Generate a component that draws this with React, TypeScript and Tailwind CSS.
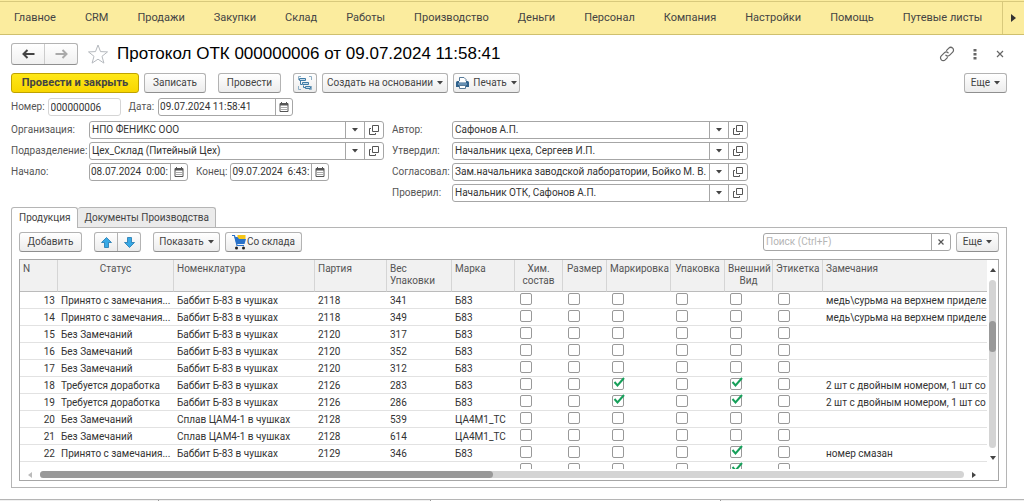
import { useState } from 'react';
import type { ReactNode } from 'react';

type CheckKey = 'chem' | 'size' | 'marking' | 'packing' | 'look' | 'label';

interface Row {
  n: number;
  status: string;
  item: string;
  batch: string;
  weight: string;
  grade: string;
  checks: CheckKey[];
  note: string;
}

const MENU = [
  'Главное',
  'CRM',
  'Продажи',
  'Закупки',
  'Склад',
  'Работы',
  'Производство',
  'Деньги',
  'Персонал',
  'Компания',
  'Настройки',
  'Помощь',
  'Путевые листы',
];

const CHECK_COLUMNS: { key: CheckKey; title: string }[] = [
  { key: 'chem', title: 'Хим. состав' },
  { key: 'size', title: 'Размер' },
  { key: 'marking', title: 'Маркировка' },
  { key: 'packing', title: 'Упаковка' },
  { key: 'look', title: 'Внешний Вид' },
  { key: 'label', title: 'Этикетка' },
];

const B83 = 'Баббит Б-83 в чушках';
const CAM = 'Сплав ЦАМ4-1 в чушках';

const ROWS: Row[] = [
  { n: 13, status: 'Принято с замечания...', item: B83, batch: '2118', weight: '341', grade: 'Б83', checks: [], note: 'медь\\сурьма на верхнем приделе' },
  { n: 14, status: 'Принято с замечания...', item: B83, batch: '2118', weight: '349', grade: 'Б83', checks: [], note: 'медь\\сурьма на верхнем приделе' },
  { n: 15, status: 'Без Замечаний', item: B83, batch: '2120', weight: '317', grade: 'Б83', checks: [], note: '' },
  { n: 16, status: 'Без Замечаний', item: B83, batch: '2120', weight: '352', grade: 'Б83', checks: [], note: '' },
  { n: 17, status: 'Без Замечаний', item: B83, batch: '2120', weight: '312', grade: 'Б83', checks: [], note: '' },
  { n: 18, status: 'Требуется доработка', item: B83, batch: '2126', weight: '283', grade: 'Б83', checks: ['marking', 'look'], note: '2 шт с двойным номером, 1 шт со' },
  { n: 19, status: 'Требуется доработка', item: B83, batch: '2126', weight: '286', grade: 'Б83', checks: ['marking', 'look'], note: '2 шт с двойным номером, 1 шт со' },
  { n: 20, status: 'Без Замечаний', item: CAM, batch: '2128', weight: '539', grade: 'ЦА4М1_ТС', checks: [], note: '' },
  { n: 21, status: 'Без Замечаний', item: CAM, batch: '2128', weight: '614', grade: 'ЦА4М1_ТС', checks: [], note: '' },
  { n: 22, status: 'Принято с замечания...', item: B83, batch: '2129', weight: '346', grade: 'Б83', checks: ['look'], note: 'номер смазан' },
];

const buttonClass =
  'flex h-5 items-center justify-center rounded-[3px] border border-[#b3b3b3] border-b-[#8f8f8f] bg-linear-to-b from-white to-[#ececec] whitespace-nowrap text-[#444]';

function Caret() {
  return (
    <svg width="6" height="4" viewBox="0 0 6 4" className="shrink-0" aria-hidden="true">
      <path d="M0 0h6L3 3.5z" fill="#444" />
    </svg>
  );
}

function CalendarIcon() {
  return (
    <svg width="10" height="10" viewBox="0 0 10 10" aria-hidden="true">
      <path d="M1 1.5h8v8H1z" fill="#fff" stroke="#555" />
      <path d="M1 1h8v2.5H1z" fill="#555" />
      <path d="M2.5 0v2M7.5 0v2" stroke="#555" />
      <path d="M2.5 5.5h5.5M2.5 7.5h5.5" stroke="#555" strokeDasharray="1 1" />
    </svg>
  );
}

function OpenIcon() {
  return (
    <svg width="10" height="10" viewBox="0 0 10 10" fill="none" stroke="#555" aria-hidden="true">
      <path d="M3.5 0.5h6v6h-6z" />
      <path d="M2 3.5H0.5v6h6V8" />
    </svg>
  );
}

function StarIcon() {
  return (
    <svg width="22" height="20" viewBox="0 0 22 20" fill="none" stroke="#b5b9be" aria-hidden="true">
      <path d="M11 1l2.5 6.6 7 .3-5.5 4.4 1.9 6.8L11 15.2l-5.9 3.9L7 12.3 1.5 7.9l7-.3z" />
    </svg>
  );
}

function LinkIcon() {
  return (
    <svg width="16" height="16" viewBox="0 0 16 16" fill="none" stroke="#666" strokeWidth="1.2" strokeLinecap="round" aria-hidden="true">
      <path d="M7.6 4.4L9.8 2.2a2.7 2.7 0 0 1 3.9 3.9L10.7 9.2a2.7 2.7 0 0 1-3.8 0" />
      <path d="M8.4 11.6L6.2 13.8a2.7 2.7 0 0 1-3.9-3.9L5.3 6.8a2.7 2.7 0 0 1 3.8 0" />
    </svg>
  );
}

function StructureIcon() {
  return (
    <svg width="14" height="14" viewBox="0 0 14 14" fill="none" stroke="#3f7ba6" className="shrink-0" aria-hidden="true">
      <path d="M0.5 4V0.5H3M11 0.5h2.5V4M0.5 10v3.5H3M11 13.5h2.5V10" stroke="#8fb0c6" />
      <path d="M2.5 5v3.5H4M5.5 9.5v2H7" />
      <path d="M1.5 2.5h6v2h-6zM4.5 6.5h6v2h-6zM7.5 10.5h5v2h-5z" fill="#c4dcec" />
    </svg>
  );
}

function PrinterIcon() {
  return (
    <svg width="13" height="12" viewBox="0 0 13 12" className="shrink-0" aria-hidden="true">
      <path d="M3.5 0.5h4.5l2 2v3H3.5z" fill="#fff" stroke="#587b99" />
      <path d="M1.5 4h10a1.5 1.5 0 0 1 1.5 1.5V10H0V5.5A1.5 1.5 0 0 1 1.5 4z" fill="#2f618c" />
      <path d="M3 4h7v1.5H3z" fill="#fff" />
      <path d="M2 7h9" stroke="#9dbfda" />
      <path d="M3.5 8.5h6v3h-6z" fill="#fff" stroke="#587b99" />
    </svg>
  );
}

function BlueArrow({ down = false }: { down?: boolean }) {
  return (
    <svg width="11" height="11" viewBox="0 0 11 11" className={down ? 'rotate-180' : ''} aria-hidden="true">
      <path d="M5.5 0.5L10.5 5.5H7.5V10.5h-4V5.5H0.5z" fill="#37a9e6" stroke="#2077ae" strokeWidth=".8" />
    </svg>
  );
}

function CartIcon() {
  return (
    <svg width="15" height="16" viewBox="0 0 15 16" className="shrink-0" aria-hidden="true">
      <path d="M5.5 1h8v4h-8z" fill="#f5c518" />
      <path d="M0 1.5h2.5L5 11.5h7" fill="none" stroke="#2871c9" strokeWidth="1.2" />
      <path d="M2.5 3h3l1.5 2h7L12.5 10H4.5z" fill="#2871c9" />
      <circle cx="4.5" cy="14" r="1.5" fill="#222" />
      <circle cx="11.5" cy="14" r="1.5" fill="#222" />
    </svg>
  );
}

function NavArrow({ color, flip = false }: { color: string; flip?: boolean }) {
  return (
    <svg width="13" height="10" viewBox="0 0 13 10" className={flip ? 'rotate-180' : ''} fill="none" stroke={color} aria-hidden="true">
      <path d="M12.5 5H2" strokeWidth="2" />
      <path d="M5.5 1L1.5 5l4 4" strokeWidth="2" />
    </svg>
  );
}

function ScrollArrow({ className = '', color = '#444' }: { className?: string; color?: string }) {
  return (
    <svg width="4" height="6" viewBox="0 0 4 6" className={className} aria-hidden="true">
      <path d="M0 0l4 3-4 3z" fill={color} />
    </svg>
  );
}

const boxClass = 'flex h-[18px] min-w-0 overflow-hidden rounded-[3px] border border-[#a6a6a6] bg-white';
const inputClass = 'min-w-0 flex-1 pl-[2px] text-[#333] outline-none';
const innerButtonClass = 'flex w-[19px] shrink-0 items-center justify-center border-l border-[#a6a6a6]';

function RefField({ id, label, value }: { id: string; label: string; value: string }) {
  return (
    <>
      <label htmlFor={id}>{label}</label>
      <div className={boxClass}>
        <input id={id} defaultValue={value} className={inputClass} />
        <button aria-label="Выбрать" className={innerButtonClass}>
          <Caret />
        </button>
        <button aria-label="Открыть" className={innerButtonClass}>
          <OpenIcon />
        </button>
      </div>
    </>
  );
}

function DateField({ id, value, width }: { id: string; value: string; width: string }) {
  return (
    <div className={`${boxClass} ${width}`}>
      <input id={id} defaultValue={value} className="min-w-0 flex-1 pl-px text-[#333] outline-none" />
      <button aria-label="Календарь" className="flex w-[17px] shrink-0 items-center justify-center border-l border-[#a6a6a6]">
        <CalendarIcon />
      </button>
    </div>
  );
}

function CheckBox({ name, checked }: { name: string; checked: boolean }) {
  return (
    <span className="relative block h-3 w-3">
      <input
        type="checkbox"
        aria-label={name}
        defaultChecked={checked}
        className="peer block h-3 w-3 appearance-none rounded-[2px] border border-[#999] bg-white"
      />
      <svg
        width="12"
        height="12"
        viewBox="0 0 12 12"
        className="pointer-events-none absolute top-[-1px] left-px hidden peer-checked:block"
        fill="none"
        stroke="#16a05a"
        strokeWidth="2"
        aria-hidden="true"
      >
        <path d="M1.5 5l3 3.5L11 1" />
      </svg>
    </span>
  );
}

function Th({ children, center = false }: { children: ReactNode; center?: boolean }) {
  return (
    <th
      className={`h-8 border-r border-b border-r-[#d5d5d5] border-b-[#bbb] px-[3px] pt-[3px] align-top leading-3 font-normal last:border-r-0 ${center ? 'text-center' : 'text-left'}`}
    >
      {children}
    </th>
  );
}

export default function App() {
  const [tab, setTab] = useState('products');

  const tabClass = (name: string) =>
    tab === name
      ? '-mb-px h-[21px] rounded-t-[3px] border border-b-0 border-[#b5b5b5] bg-white px-[7px]'
      : 'h-5 rounded-t-[3px] border border-b-0 border-l-0 border-[#b5b5b5] bg-[#ebebeb] px-[6px]';

  return (
    <div className="bg-white font-[Roboto,'Noto_Sans',sans-serif] text-[10px] leading-[14px] text-[#555]">
      <nav className="flex h-[35px] border-b border-[#cfc06e] bg-[#fbec9e] pt-px text-[11px] text-[#444]">
        <div className="flex min-w-0 flex-1 items-center gap-[29px] overflow-hidden border-t border-[#d8c97c] pl-[14px]">
          {MENU.map(item => (
            <a key={item} href="#" className="whitespace-nowrap">
              {item}
            </a>
          ))}
        </div>
        <button aria-label="Дальше" className="flex w-[22px] items-center justify-center border-t border-l border-[#d8c97c]">
          <svg width="5" height="8" viewBox="0 0 5 8" aria-hidden="true">
            <path d="M0 0l5 4-5 4z" fill="#333" />
          </svg>
        </button>
      </nav>

      <header className="flex h-[38px] items-center pr-[19px] pl-[11px]">
        <div className="flex h-[22px] w-[67px] shrink-0 rounded-[3px] border border-[#b3b3b3] border-b-[#8f8f8f] bg-linear-to-b from-white to-[#f0f0f0]">
          <button aria-label="Назад" className="flex flex-1 items-center justify-center">
            <NavArrow color="#444" />
          </button>
          <button aria-label="Вперед" className="flex flex-1 items-center justify-center border-l border-[#ccc]">
            <NavArrow color="#aaa" flip />
          </button>
        </div>
        <button aria-label="В избранное" className="ml-[9px]">
          <StarIcon />
        </button>
        <h1 className="ml-2 flex-1 truncate font-['Liberation_Sans',Arial,sans-serif] text-[17px] leading-6 text-black">
          Протокол ОТК 000000006 от 09.07.2024 11:58:41
        </h1>
        <div className="flex items-center gap-[18px]">
          <button aria-label="Ссылка">
            <LinkIcon />
          </button>
          <button aria-label="Меню">
            <svg width="4" height="12" viewBox="0 0 4 12" fill="#666" aria-hidden="true">
              <path d="M.5 1h3v2.5h-3zM.5 5h3v2.5h-3zM.5 9h3v2.5h-3z" />
            </svg>
          </button>
          <button aria-label="Закрыть">
            <svg width="10" height="8" viewBox="0 0 10 8" stroke="#666" strokeWidth="1.2" aria-hidden="true">
              <path d="M2 1l6 6M8 1L2 7" />
            </svg>
          </button>
        </div>
      </header>

      <main className="px-[11px]">
        <div className="flex">
          <button className="h-5 w-32 rounded-[3px] border border-[#bfa200] bg-linear-to-b from-[#ffe817] to-[#f8d600] text-[11px] font-bold text-[#444]">
            Провести и закрыть
          </button>
          <button className={`${buttonClass} ml-[5px] w-[62px]`}>Записать</button>
          <button className={`${buttonClass} ml-3 w-[63px]`}>Провести</button>
          <button aria-label="Структура подчиненности" className={`${buttonClass} ml-3 w-6`}>
            <StructureIcon />
          </button>
          <button className={`${buttonClass} ml-[5px] w-[126px] gap-1`}>
            Создать на основании
            <Caret />
          </button>
          <button className={`${buttonClass} ml-[5px] w-[67px] gap-1`}>
            <PrinterIcon />
            Печать
            <Caret />
          </button>
          <button className={`${buttonClass} mr-[6px] ml-auto w-[43px] gap-1`}>
            Еще
            <Caret />
          </button>
        </div>

        <div className="mt-[5px] flex items-center">
          <label htmlFor="number">Номер:</label>
          <input
            id="number"
            defaultValue="000000006"
            className="ml-[3px] h-[18px] w-[73px] rounded-[3px] border border-[#d5d5d5] pl-[2px] text-[#333] outline-none"
          />
          <label htmlFor="date" className="mr-1 ml-2">
            Дата:
          </label>
          <DateField id="date" value="09.07.2024 11:58:41" width="w-[135px]" />
        </div>

        <div className="mt-[5px] flex items-start gap-2">
          <div className="grid grid-cols-[74px_295px] items-center gap-x-1 gap-y-[3px]">
            <RefField id="org" label="Организация:" value="НПО ФЕНИКС ООО" />
            <RefField id="dept" label="Подразделение:" value="Цех_Склад (Питейный Цех)" />
            <label htmlFor="start">Начало:</label>
            <div className="flex items-center">
              <DateField id="start" value="08.07.2024  0:00:" width="w-[99px]" />
              <label htmlFor="end" className="mr-[3px] ml-2">
                Конец:
              </label>
              <DateField id="end" value="09.07.2024  6:43:" width="w-[99px]" />
            </div>
          </div>
          <div className="grid grid-cols-[56px_296px] items-center gap-x-1 gap-y-[3px]">
            <RefField id="author" label="Автор:" value="Сафонов А.П." />
            <RefField id="approved" label="Утвердил:" value="Начальник цеха, Сергеев И.П." />
            <RefField id="agreed" label="Согласовал:" value="Зам.начальника заводской лаборатории, Бойко М. В." />
            <RefField id="checked" label="Проверил:" value="Начальник ОТК, Сафонов А.П." />
          </div>
        </div>

        <div role="tablist" className="mt-[5px] flex items-end text-[#444]">
          <button role="tab" aria-selected={tab === 'products'} onClick={() => setTab('products')} className={`relative ${tabClass('products')}`}>
            Продукция
          </button>
          <button role="tab" aria-selected={tab === 'docs'} onClick={() => setTab('docs')} className={tabClass('docs')}>
            Документы Производства
          </button>
        </div>

        <section className="mr-[6px] border border-[#b5b5b5] px-[7px] pt-1 pb-[6px]">
          <div className="flex">
            <button className={`${buttonClass} w-[63px]`}>Добавить</button>
            <div className="ml-3 flex h-5 w-[47px] rounded-[3px] border border-[#b3b3b3] border-b-[#8f8f8f] bg-linear-to-b from-white to-[#ececec]">
              <button aria-label="Вверх" className="flex flex-1 items-center justify-center">
                <BlueArrow />
              </button>
              <button aria-label="Вниз" className="flex flex-1 items-center justify-center border-l border-[#b3b3b3]">
                <BlueArrow down />
              </button>
            </div>
            <button className={`${buttonClass} ml-3 w-[67px] gap-1`}>
              Показать
              <Caret />
            </button>
            <button className={`${buttonClass} ml-[5px] w-[77px]`}>
              <CartIcon />
              Со склада
            </button>
            <div className={`${boxClass} mt-px ml-auto w-[188px]`}>
              <input aria-label="Поиск" placeholder="Поиск (Ctrl+F)" className={`${inputClass} placeholder:text-[#b5b5b5]`} />
              <button aria-label="Очистить" className={innerButtonClass}>
                <svg width="6" height="6" viewBox="0 0 6 6" stroke="#555" strokeWidth="1.2" aria-hidden="true">
                  <path d="M.5 .5l5 5M5.5 .5l-5 5" />
                </svg>
              </button>
            </div>
            <button className={`${buttonClass} ml-[5px] w-[43px] gap-1`}>
              Еще
              <Caret />
            </button>
          </div>

          <div className="mt-[7px] border border-[#a6a6a6]">
            <div className="flex">
              <div className="h-[209px] min-w-0 flex-1 overflow-hidden">
                <table className="w-full table-fixed border-separate border-spacing-0">
                  <colgroup>
                    <col className="w-[38px]" />
                    <col className="w-[116px]" />
                    <col className="w-[141px]" />
                    <col className="w-[72px]" />
                    <col className="w-[65px]" />
                    <col className="w-[63px]" />
                    <col className="w-[48px]" />
                    <col className="w-[44px]" />
                    <col className="w-[64px]" />
                    <col className="w-[54px]" />
                    <col className="w-[48px]" />
                    <col className="w-[50px]" />
                    <col />
                  </colgroup>
                  <thead className="bg-[#f1f1f1]">
                    <tr>
                      <Th>N</Th>
                      <Th center>Статус</Th>
                      <Th>Номенклатура</Th>
                      <Th>Партия</Th>
                      <Th>Вес Упаковки</Th>
                      <Th>Марка</Th>
                      {CHECK_COLUMNS.map(col => (
                        <Th key={col.key} center>
                          {col.title}
                        </Th>
                      ))}
                      <Th>Замечания</Th>
                    </tr>
                  </thead>
                  <tbody className="text-[#333] [&_td]:h-[17px] [&_td]:border-b [&_td]:border-[#e2e2e2] [&_td]:px-[3px] [&_td]:pt-px [&_td]:pb-0 [&_td]:whitespace-nowrap">
                    {ROWS.map(row => (
                      <tr key={row.n}>
                        <td className="text-right">{row.n}</td>
                        <td>{row.status}</td>
                        <td>{row.item}</td>
                        <td>{row.batch}</td>
                        <td>{row.weight}</td>
                        <td>{row.grade}</td>
                        {CHECK_COLUMNS.map(col => (
                          <td key={col.key} className="pl-[5px]! align-top">
                            <CheckBox name={`${col.title} ${row.n}`} checked={row.checks.includes(col.key)} />
                          </td>
                        ))}
                        <td className="pr-0!">{row.note}</td>
                      </tr>
                    ))}
                    <tr>
                      <td colSpan={6} />
                      {CHECK_COLUMNS.map(col => (
                        <td key={col.key} className="pl-[5px]! align-top">
                          <CheckBox name={`${col.title} 23`} checked={col.key === 'look'} />
                        </td>
                      ))}
                      <td />
                    </tr>
                  </tbody>
                </table>
              </div>
              <div className="flex w-[11px] flex-col items-center pt-[7px] pb-2">
                <ScrollArrow className="-rotate-90" />
                <div className="my-[7px] w-[7px] flex-1 rounded-full bg-[#d4d4d4] pt-[41px]">
                  <div className="h-[31px] rounded-full bg-[#999]" />
                </div>
                <ScrollArrow className="rotate-90" />
              </div>
            </div>
            <div className="flex h-[11px] items-center pr-[22px] pl-2">
              <ScrollArrow className="rotate-180" color="#bbb" />
              <div className="mx-2 h-[7px] flex-1 rounded-full bg-[#d4d4d4]">
                <div className="h-full w-[49%] rounded-full bg-[#999]" />
              </div>
              <ScrollArrow />
            </div>
          </div>
        </section>
      </main>

      <footer className="mt-[11px] flex h-[3px] border-t border-[#b5b5b5] bg-[#f0f0f0]">
        <div className="w-[159px] border-r border-[#999]" />
        <div className="w-[272px] border-r border-[#999]" />
        <div className="w-[290px] border-r border-[#999] bg-white" />
      </footer>
    </div>
  );
}
